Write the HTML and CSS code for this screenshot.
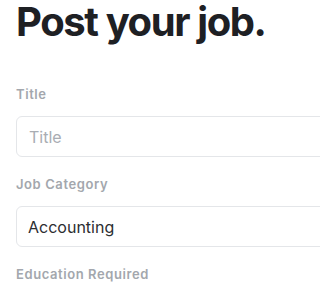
FILE: index.html
```html
<!DOCTYPE html>
<html lang="en">
<head>
<meta charset="utf-8">
<link rel="stylesheet" href="styles.css">
</head>
<body>
<main class="page">
  <h1 class="title">Post your job.</h1>
  <form class="form">
    <div class="field">
      <label class="label" for="t">Title</label>
      <input class="control" id="t" type="text" placeholder="Title">
    </div>
    <div class="field">
      <label class="label" for="c">Job Category</label>
      <select class="control select" id="c">
        <option>Accounting</option>
      </select>
    </div>
    <div class="field">
      <label class="label" for="e">Education Required</label>
    </div>
  </form>
</main>
</body>
</html>
```
FILE: styles.css
```css
html, body {
  margin: 0;
  padding: 0;
  background: #ffffff;
  overflow: hidden;
}
.page {
  padding: 0 0 0 16px;
  font-family: Inter, "Noto Sans", sans-serif;
}
.title {
  margin: 0;
  font-size: 40px;
  line-height: 44px;
  font-weight: 700;
  color: #1e2024;
  letter-spacing: -0.035em;
}
.form {
  display: flex;
  flex-direction: column;
  gap: 19px;
  margin-top: 42px;
}
.field {
  display: flex;
  flex-direction: column;
  align-items: flex-start;
  gap: 14px;
}
.label {
  font-size: 13px;
  line-height: 16px;
  font-weight: 600;
  color: #a3a7ad;
  letter-spacing: 0.045em;
}
.control {
  box-sizing: border-box;
  height: 41px;
  width: 400px;
  margin: 0;
  border: 1px solid #e4e6e9;
  border-radius: 6px;
  background: #ffffff;
  padding: 0 12px;
  font-family: Inter, "Noto Sans", sans-serif;
  font-size: 16px;
  color: #2b2d31;
  outline: none;
}
.control::placeholder {
  color: #a9adb3;
}
.select {
  appearance: none;
  -webkit-appearance: none;
  padding-left: 11px;
}
```
